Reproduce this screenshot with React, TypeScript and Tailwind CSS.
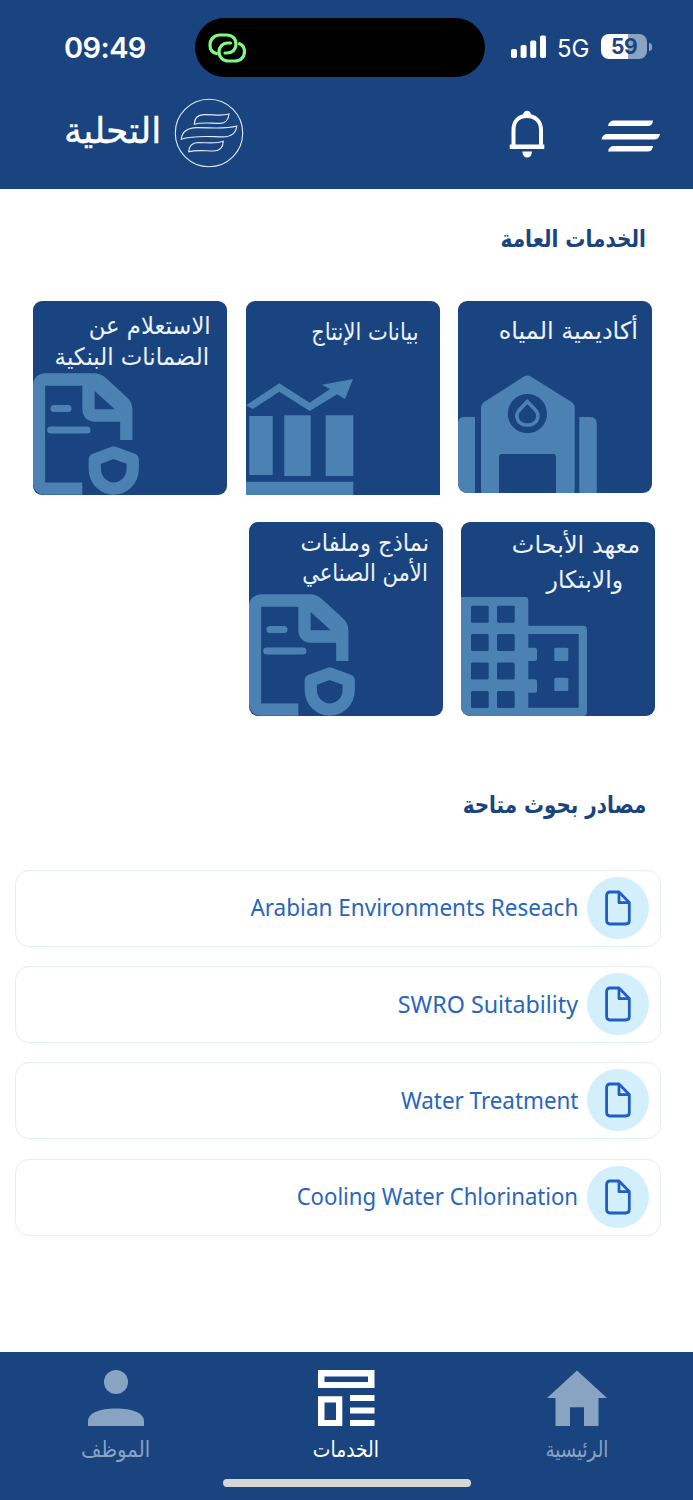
import { ReactNode } from "react";
import clsx from "clsx";

const ARABIC = "font-['DejaVu_Sans',sans-serif]";

interface Line {
  text: string;
  className: string;
}

interface ServiceCardProps {
  lines: Line[];
  className?: string;
  children: ReactNode;
}

function ServiceCard({ lines, className, children }: ServiceCardProps) {
  return (
    <button
      className={clsx(
        "relative flex w-[194px] shrink-0 flex-col items-start overflow-hidden bg-[#1a4480] text-[24px] text-[#edf3fa]",
        className
      )}
    >
      <svg viewBox="0 0 194 194" className="absolute left-0 top-0 size-[194px] text-[#4b81b3]" fill="currentColor">
        {children}
      </svg>
      {lines.map((line) => (
        <span
          key={line.text}
          className={clsx("relative block w-fit origin-right whitespace-nowrap", line.className)}
        >
          {line.text}
        </span>
      ))}
    </button>
  );
}

function FormShieldArt() {
  return (
    <g fill="none" stroke="currentColor" strokeWidth="12.3">
      <path d="M49.3 187.6H12Q6 187.6 6 181V85Q6 78.5 13 78.5H61Q65 78.5 68 81L90 101Q93.3 104 93.3 109V139" />
      <path d="M55.5 79V108Q55.5 114.5 62 114.5H93" />
      <path d="M61 84L93 113" strokeWidth="8" />
      <path d="M21 107.5H35M17.6 129H54" strokeWidth="7" strokeLinecap="round" />
      <path
        d="M80.7 151.5L99.7 158.5V168C99.7 180 90 187.6 80.7 187.6S61.8 180 61.8 168V158.5Z"
        strokeLinejoin="round"
      />
    </g>
  );
}

function ChartArt() {
  return (
    <>
      <path d="M0 104.3L33.3 82.3 63.7 101.7 84 88 76 83.7 107 78 99 98 91 93.3 63.7 110 33.3 90.7 6.7 108Z" />
      <path d="M3.3 115h23.4v59H3.3zM38.3 114.3h26.4V175H38.3zM79.7 114.3h27.6V175H79.7zM0 180.7h107.3V194H0z" />
    </>
  );
}

function AcademyArt() {
  return (
    <>
      <path d="M0 194V122Q0 116 6 116H17V194ZM121.3 194V116H132Q138.8 116 138.8 123V194Z" />
      <path d="M23 194V107Q23 103 26.5 100.7L66 75.5Q69.4 73.7 72.8 75.5L113.2 100.7Q116.7 103 116.7 107V194H98V156Q98 153 95 153H44Q41 153 41 156V194Z" />
      <circle cx="69.4" cy="112.7" r="19.6" fill="#1a4480" />
      <path
        d="M69.4 100.6L61.8 108.4C55.5 115 60 124 69.4 124S83.3 115 77 108.4Z"
        fill="none"
        stroke="currentColor"
        strokeWidth="3.6"
      />
    </>
  );
}

function BuildingsArt() {
  return (
    <>
      <path d="M0 75H64Q67.3 75 67.3 78.3V103.7H122Q126 103.7 126 108V190Q126 194 122 194H0Z" />
      <path
        d="M67.3 112H117.7V185.7H67.3V170.7H74Q76 170.7 76 168.7V159.3Q76 157.3 74 157.3H67.3V139H74Q76 139 76 137V127.7Q76 125.7 74 125.7H67.3Z"
        fill="#1a4480"
      />
      {[83.7, 112, 140.6, 169].map((y) => (
        <g key={y} fill="#1a4480">
          <rect x="10" y={y} width="17.7" height="17" rx="1.5" />
          <rect x="36" y={y} width="17.7" height="17" rx="1.5" />
        </g>
      ))}
      <rect x="93.3" y="125.7" width="14" height="13.3" rx="1.5" />
      <rect x="93.3" y="155.8" width="14" height="13.3" rx="1.5" />
    </>
  );
}

function StatusBar() {
  return (
    <div className="flex h-[94px] items-start text-white font-['Inter',sans-serif]">
      <span className="ml-[64px] mt-[30px] w-[131px] text-[29px] font-semibold leading-[36px] tracking-[-0.6px]">09:49</span>
      <div className="mt-[18px] flex h-[59px] w-[290px] items-center rounded-full bg-black pl-[13px]">
        <svg viewBox="0 0 38 30" className="h-[30px] w-[38px]" fill="none" stroke="#7dfc81" strokeWidth="3.2" strokeLinecap="round">
          <path d="M8.5 20.5C4 19.5 2 16 2 12C2 6 6.5 2 12 2H18.5C24.5 2 28 6 28 11C28 16.5 24 20 19 20H17" />
          <path d="M22.5 10H20C14.5 10 11 14 11 18.5C11 24 15 28 20.5 28H27C32.5 28 36.5 24 36.5 18.5C36.5 15 34.5 12 31.5 10.7" />
        </svg>
      </div>
      <svg viewBox="0 0 36 24" className="ml-[26px] mt-[35px] h-6 w-9" fill="currentColor">
        <rect x="0" y="14" width="6" height="9" rx="1.8" />
        <rect x="9.6" y="10" width="6" height="13" rx="1.8" />
        <rect x="19.2" y="5.5" width="6" height="17.5" rx="1.8" />
        <rect x="29" y="0.5" width="6" height="22.5" rx="1.8" />
      </svg>
      <span className="ml-[10px] mt-[31px] w-[33px] text-[24px] leading-[36px]">5G</span>
      <div className="ml-[11px] mt-[34px] flex h-[25px] w-[46px] items-center justify-center overflow-hidden rounded-[8px] bg-[linear-gradient(90deg,#fff_59%,#8ba3c2_59%)] text-[21px] font-bold leading-none tracking-[-0.5px] text-[#1a4480]">
        59
      </div>
      <div className="ml-[2px] mt-[43px] h-[8px] w-[3px] rounded-r-full bg-[#8ba3c2]" />
    </div>
  );
}

function Header() {
  return (
    <header className="h-[189px] bg-[#1a4480]">
      <StatusBar />
      <div className="flex h-[77px] items-center text-white">
        <div className="-mt-[3px] ml-[64px] flex w-[98px] justify-start">
          <span
            dir="rtl"
            className={clsx("whitespace-nowrap text-[36px] leading-[60px] [-webkit-text-stroke:0.4px_white]", ARABIC)}
          >
            التحلية
          </span>
        </div>
        <svg viewBox="0 0 70 70" className="ml-[12px] size-[70px]" fill="none" stroke="#e3ecf5" strokeWidth="1.1">
          <circle cx="35" cy="35" r="33.7" />
          <path d="M20.3 26.2C20.3 20 24 16.8 30 16.6C40 16.5 47 18.3 55 16C54.5 22 51 25.2 46 25.4C37 25.4 29 23.8 20.3 26.2Z" />
          <path d="M7.2 41.3C8 33 15 29.8 23 29.6C38 29.5 50 31.5 62.8 28C62 35 57 38.8 49 38.9C36 38.7 21 36.8 7.2 41.3Z" />
          <path d="M14.7 53.8C15 47.5 19 44.8 24 44.5C34 44.5 41 46 49.3 43.3C49 50 45 52.8 40 53C31 53 23 51.5 14.7 53.8Z" />
        </svg>
        <svg viewBox="0 0 36 48" className="ml-[265px] mt-[2px] h-[48px] w-[36px]">
          <path d="M4.5 36V20C4.5 11 10 6 18 6S32 11 32 20V36" fill="none" stroke="#fff" strokeWidth="4" />
          <path d="M13.5 6Q14.5 .7 18 .7T22.7 6ZM.7 34.5H35.3V39H.7ZM13.3 41.5H23Q22.5 47.5 18.2 47.5T13.3 41.5Z" fill="#fff" />
        </svg>
        <svg viewBox="0 0 60 32" className="ml-[56px] mt-[6px] h-[32px] w-[60px]" fill="currentColor">
          <path d="M7 6Q8 .5 13 .5H52Q51.5 6 46.5 6ZM.5 19.5Q1.5 14 6.5 14H59Q58 19.5 53 19.5ZM7 31.5Q8 26 13 26H52Q51.5 31.5 46.5 31.5Z" />
        </svg>
      </div>
    </header>
  );
}

const resources = [
  { title: "Arabian Environments Reseach", className: "scale-x-[0.958]" },
  { title: "SWRO Suitability", className: "scale-x-[0.99]" },
  { title: "Water Treatment", className: "scale-x-[0.952]" },
  { title: "Cooling Water Chlorination", className: "scale-x-[0.941]" },
];

function ResourceRow({ title, className }: { title: string; className: string }) {
  return (
    <li className="flex h-[77px] items-center justify-end gap-[9px] rounded-[14px] border-[1.5px] border-[#e7edf5] pb-px pr-[11px]">
      <span className={clsx("origin-right whitespace-nowrap font-['Noto_Sans',sans-serif] text-[23.5px] text-[#2865bd]", className)}>
        {title}
      </span>
      <span className="flex size-[62px] items-center justify-center rounded-full bg-[#d4effc]">
        <svg viewBox="0 0 26 36" className="h-[36px] w-[26px]" fill="none" stroke="#1f5fc2" strokeWidth="2.8" strokeLinejoin="round">
          <path d="M5 2H14L24.3 12.5V30.5Q24.3 34 20.8 34H5Q1.6 34 1.6 30.5V5.5Q1.6 2 5 2Z" />
          <path d="M14 2V12.7H24" />
        </svg>
      </span>
    </li>
  );
}

interface TabProps {
  label: string;
  className?: string;
  labelClass: string;
  children: ReactNode;
}

function Tab({ label, className, labelClass, children }: TabProps) {
  return (
    <button className={clsx("flex w-[231px] flex-col items-center", className)}>
      <svg viewBox="0 0 60 56" className="h-[56px] w-[60px]" fill="currentColor">
        {children}
      </svg>
      <span className={clsx("mt-[7px] whitespace-nowrap text-[22px] leading-[34px]", labelClass)}>{label}</span>
    </button>
  );
}

export default function App() {
  return (
    <div className="flex h-[1500px] w-[693px] flex-col overflow-hidden bg-white">
      <Header />

      <main dir="rtl" className={clsx("flex-1", ARABIC)}>
        <h2 className="mr-[47px] mt-[30px] w-fit origin-right scale-x-[0.836] text-[24px] font-bold leading-[40px] text-[#1a4480]">
          الخدمات العامة
        </h2>

        {/* Services */}
        <div className="mr-[41px] mt-[42px] flex items-start gap-[18.5px]">
          <ServiceCard
            className="h-[192px] rounded-[9px]"
            lines={[{ text: "أكاديمية المياه", className: "mr-[14px] mt-[12px] leading-[36px]" }]}
          >
            <AcademyArt />
          </ServiceCard>
          <ServiceCard
            className="h-[194px] rounded-t-[9px]"
            lines={[{ text: "بيانات الإنتاج", className: "mr-[21px] mt-[13px] scale-x-[0.875] leading-[36px]" }]}
          >
            <ChartArt />
          </ServiceCard>
          <ServiceCard
            className="h-[194px] rounded-[9px]"
            lines={[
              { text: "الاستعلام عن", className: "mr-[16px] mt-[10px] scale-x-[0.948] leading-[31px]" },
              { text: "الضمانات البنكية", className: "mr-[18px] scale-x-[0.953] leading-[31px]" },
            ]}
          >
            <FormShieldArt />
          </ServiceCard>
        </div>
        <div className="mr-[38px] mt-[27px] flex items-start gap-[18.5px]">
          <ServiceCard
            className="h-[194px] rounded-[9px]"
            lines={[
              { text: "معهد الأبحاث", className: "mr-[15px] mt-[6px] leading-[35px]" },
              { text: "والابتكار", className: "mr-[32px] scale-x-[0.98] leading-[35px]" },
            ]}
          >
            <BuildingsArt />
          </ServiceCard>
          <ServiceCard
            className="h-[194px] rounded-[9px]"
            lines={[
              { text: "نماذج وملفات", className: "mr-[13px] mt-[6px] scale-x-[0.945] leading-[30px]" },
              { text: "الأمن الصناعي", className: "mr-[15px] scale-x-[0.88] leading-[30px]" },
            ]}
          >
            <FormShieldArt />
          </ServiceCard>
        </div>

        {/* Research resources */}
        <h2 className="mr-[47px] mt-[69px] w-fit origin-right scale-x-[0.83] text-[24px] font-bold leading-[40px] text-[#1a4480]">
          مصادر بحوث متاحة
        </h2>
        <ul dir="ltr" className="mr-[32px] mt-[45px] flex w-[646px] flex-col gap-[19.2px]">
          {resources.map((item) => (
            <ResourceRow key={item.title} {...item} />
          ))}
        </ul>
      </main>

      <nav className={clsx("flex h-[148px] flex-col items-center bg-[#1a4480] text-[#89a3c2]", ARABIC)}>
        <div className="flex w-full pt-[18px]">
          <Tab label="الموظف" labelClass="scale-x-[0.895]">
            <circle cx="30" cy="12" r="12" />
            <path d="M2 56V51C2 43 14 38.5 30 38.5S58 43 58 51V56Z" />
          </Tab>
          <Tab label="الخدمات" className="-ml-px text-white" labelClass="scale-x-[0.85]">
            <path
              fillRule="evenodd"
              d="M2 0H58.5V18H2ZM8.5 6.5V12H52V6.5ZM2 26.3H26.3V56H2ZM8.5 32.5V50H20V32.5ZM34 25H58.5V31H34ZM34 37.5H58.5V43.5H34ZM34 50H58.5V56H34Z"
            />
          </Tab>
          <Tab label="الرئيسية" labelClass="scale-x-[0.83]">
            <path d="M30 .5L60 28H51.5V56H37V37.3H23V56H8.5V28H0Z" />
          </Tab>
        </div>
        <div className="mt-[12px] h-[8px] w-[248px] rounded-full bg-[#d6d6d6]" />
      </nav>
    </div>
  );
}
